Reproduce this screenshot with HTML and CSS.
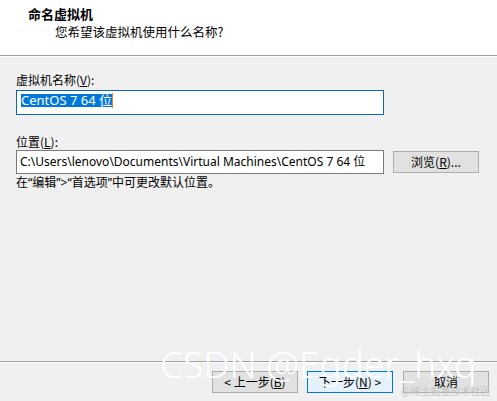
FILE: index.html
```html
<!DOCTYPE html>
<html lang="zh-CN">
<head>
<meta charset="utf-8">
<link rel="stylesheet" href="styles.css">
</head>
<body>
<div class="dialog">
  <div class="header">
    <div class="title">命名虚拟机</div>
    <div class="subtitle">您希望该虚拟机使用什么名称?</div>
  </div>
  <div class="content">
    <div class="label label-name">虚拟机名称(<u>V</u>):</div>
    <div class="field field-focus"><span class="sel">CentOS 7 64 位</span><span class="caret"></span></div>
    <div class="label label-loc">位置(<u>L</u>):</div>
    <div class="row">
      <div class="field field-path">C:\Users\lenovo\Documents\Virtual Machines\CentOS 7 64 位</div>
      <div class="btn btn-browse">浏览(<u>R</u>)...</div>
    </div>
    <div class="hint">在“编辑”&gt;“首选项”中可更改默认位置。</div>
  </div>
  <div class="footer">
    <div class="btn">&lt; 上一步(<u>B</u>)</div>
    <div class="btn btn-default">下一步(<u>N</u>) &gt;</div>
    <div class="btn">取消</div>
  </div>
  <div class="wm-csdn">CSDN @Egder_hxq</div>
  <div class="wm-juejin">@稀土掘金技术社区</div>
</div>
</body>
</html>
```
FILE: styles.css
```css
html, body {
  margin: 0;
  padding: 0;
  background: #f0f0f0;
}
.dialog {
  position: relative;
  width: 497px;
  height: 401px;
  overflow: hidden;
  display: flex;
  flex-direction: column;
  font-family: "Noto Sans", "Noto Sans CJK SC", sans-serif;
  font-size: 12px;
  color: #000;
  background: #f0f0f0;
}
.header {
  height: 56px;
  box-sizing: border-box;
  background: #fff;
  border-bottom: 1px solid #a0a0a0;
  box-shadow: 0 1px 0 #fff;
  padding: 5px 0 0 28px;
}
.title {
  font-family: "Noto Sans CJK SC", sans-serif;
  font-weight: bold;
  font-size: 13px;
  line-height: 18px;
}
.subtitle {
  font-family: "Noto Sans CJK SC", sans-serif;
  font-size: 12.5px;
  line-height: 18px;
  padding-left: 27px;
}
.content {
  flex: 1;
  padding: 16px 0 0 16px;
}
.label {
  font-family: "Noto Sans CJK SC", sans-serif;
  line-height: 16px;
}
.label u, .btn u { text-decoration-thickness: 1px; text-underline-offset: 1px; }
.field {
  box-sizing: border-box;
  width: 368px;
  background: #fff;
  border: 1px solid #7a7a7a;
  white-space: nowrap;
  overflow: hidden;
}
.field-focus {
  margin-top: 2px;
  height: 25px;
  border-color: #0b66c2;
  padding: 3px 0 0 4px;
  font-size: 13px;
  line-height: 14px;
  display: flex;
  align-items: flex-start;
}
.sel {
  background: #0078d7;
  color: #fff;
  line-height: 13px;
  height: 13px;
  display: inline-block;
}
.caret {
  display: inline-block;
  width: 1px;
  height: 15px;
  margin-top: -1px;
  background: #f08020;
}
.label-loc {
  margin-top: 19px;
}
.row {
  display: flex;
  gap: 9px;
  align-items: flex-start;
}
.field-path {
  height: 24px;
  padding: 0 0 0 3px;
  line-height: 22px;
  font-size: 12px;
}
.btn {
  box-sizing: border-box;
  width: 86px;
  height: 22px;
  background: #e1e1e1;
  border: 1px solid #adadad;
  display: flex;
  align-items: center;
  justify-content: center;
  font-family: "Noto Sans CJK SC", sans-serif;
  font-size: 12px;
  line-height: 14px;
}
.btn-browse {
  margin-top: 1px;
}
.hint {
  font-family: "Noto Sans", "Noto Sans CJK SC", sans-serif;
  line-height: 16px;
  margin-top: 1px;
}
.footer {
  height: 40px;
  box-sizing: border-box;
  border-top: 1px solid #a0a0a0;
  box-shadow: inset 0 1px 0 #fff;
  display: flex;
  justify-content: flex-end;
  align-items: flex-start;
  padding: 9px 8px 0 0;
  gap: 9px;
}
.btn-default {
  background: #e5f1fb;
  border-color: #0078d7;
  margin-right: 1px;
}
.wm-csdn {
  position: absolute;
  left: 160px;
  top: 339px;
  font-family: "Noto Sans", "Open Sans", sans-serif;
  font-weight: 300;
  font-size: 37px;
  line-height: 50px;
  color: #fff;
  white-space: nowrap;
  pointer-events: none;
}
.wm-juejin {
  position: absolute;
  left: 401px;
  top: 384px;
  font-family: "Noto Sans CJK SC", sans-serif;
  font-size: 10px;
  line-height: 13px;
  color: #c6c6c6;
  white-space: nowrap;
}
```
